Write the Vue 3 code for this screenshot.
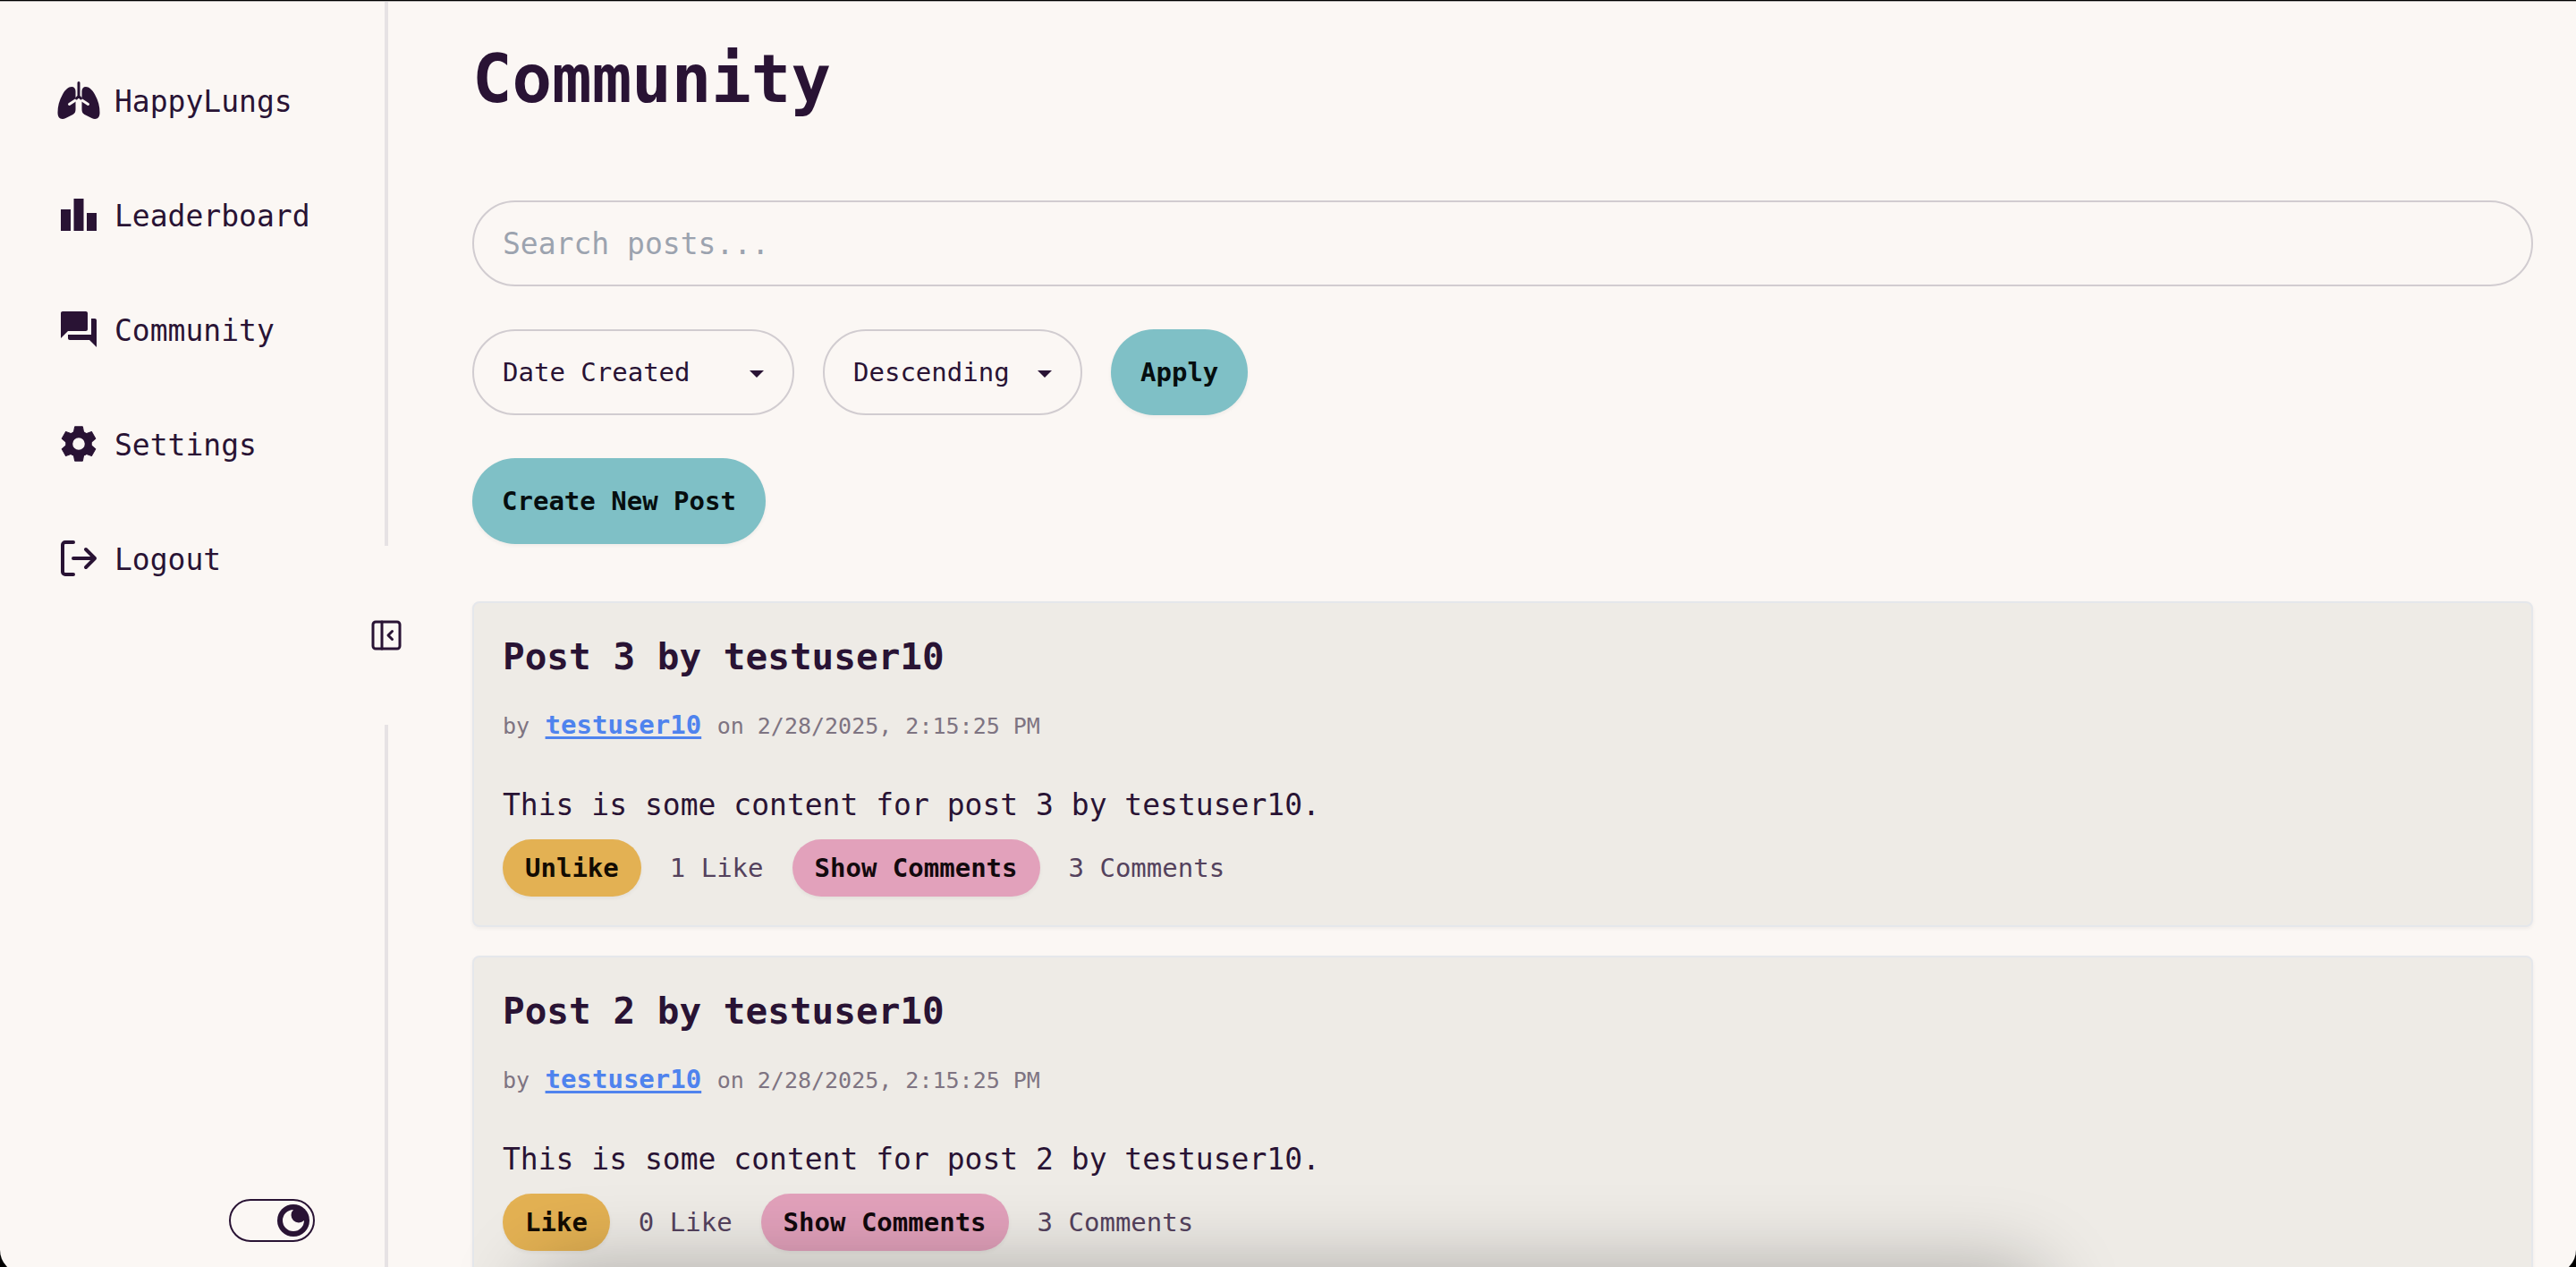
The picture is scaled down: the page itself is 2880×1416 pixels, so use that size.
<script setup>
import { ref } from 'vue'

const query = ref('')
const sortField = ref('date')
const sortOrder = ref('desc')
const darkMode = ref(true)
const cogTeeth = [0, 60, 120, 180, 240, 300]

const links = [
  { icon: 'lungs', label: 'HappyLungs' },
  { icon: 'leaderboard', label: 'Leaderboard' },
  { icon: 'forum', label: 'Community' },
  { icon: 'cog', label: 'Settings' },
  { icon: 'logout', label: 'Logout' },
]

const posts = [
  { id: 3, author: 'testuser10', date: '2/28/2025, 2:15:25 PM', liked: true, likes: 1, comments: 3 },
  { id: 2, author: 'testuser10', date: '2/28/2025, 2:15:25 PM', liked: false, likes: 0, comments: 3 },
]
</script>

<template>
  <div class="page">
    <aside class="sidebar">
      <nav class="nav">
        <a v-for="link in links" :key="link.label" href="#" class="nav-link">
          <svg v-if="link.icon === 'lungs'" class="nav-icon" viewBox="0 0 48 48" aria-hidden="true">
            <path
              fill="currentColor"
              d="M16 9C19 9 20.500 11 20.500 14V34C20.500 36.500 20 38.500 17.500 40L9.500 44C4.500 46.500 .5 44 .5 38C.5 31 2 24.500 6 17.500C9 12 12.500 9 16 9ZM32 9C29 9 27.500 11 27.500 14V34C27.500 36.500 28 38.500 30.500 40L38.500 44C43.500 46.500 47.500 44 47.500 38C47.500 31 46 24.500 42 17.500C39 12 35.500 9 32 9Z"
            />
            <path class="bronchi" d="M13.500 28.500L21.500 23.200M34.500 28.500L26.500 23.200" />
            <path class="trachea" d="M24 4.500V20.500M21.500 22L24 19.500L26.500 22" />
          </svg>
          <svg v-else-if="link.icon === 'leaderboard'" class="nav-icon" viewBox="0 0 24 24" aria-hidden="true">
            <path fill="currentColor" d="M7.500 21H2V9h5.500v12zm7.250-18h-5.500v18h5.500V3zM22 11h-5.500v10H22V11z" />
          </svg>
          <svg v-else-if="link.icon === 'forum'" class="nav-icon" viewBox="0 0 24 24" aria-hidden="true">
            <path
              fill="currentColor"
              d="M21 6h-2v9H6v2c0 .55.45 1 1 1h11l4 4V7c0-.55-.45-1-1-1zm-4 6V3c0-.55-.45-1-1-1H3c-.55 0-1 .45-1 1v14l4-4h10c.55 0 1-.45 1-1z"
            />
          </svg>
          <svg v-else-if="link.icon === 'cog'" class="nav-icon" viewBox="0 0 24 24" aria-hidden="true">
            <circle class="cog-ring" cx="12" cy="12" r="5.400" />
            <path
              v-for="angle in cogTeeth"
              :key="angle"
              class="cog-tooth"
              d="M9.800 2.400H14.200L14.800 5.600L15.600 6.500H8.400L9.200 5.600Z"
              :transform="`rotate(${angle} 12 12)`"
            />
          </svg>
          <svg v-else class="nav-icon" viewBox="0 0 24 24" aria-hidden="true">
            <path
              class="outline"
              d="M9 3H4.500A1.500 1.500 0 0 0 3 4.500V19.500A1.500 1.500 0 0 0 4.500 21H9M9 12H21M16 7L21 12L16 17"
            />
          </svg>
          <span class="nav-label">{{ link.label }}</span>
        </a>
      </nav>
      <label class="theme">
        <input v-model="darkMode" type="checkbox" class="theme-input" aria-label="Dark mode" />
        <span class="theme-track">
          <svg class="theme-knob" viewBox="0 0 36 36" aria-hidden="true">
            <circle cx="18" cy="18" r="18" fill="currentColor" />
            <path class="moon" d="M18 6A12 12 0 1 0 30 18A7 7 0 1 1 18 6Z" />
          </svg>
        </span>
      </label>
    </aside>

    <div class="divider">
      <span class="divider-line"></span>
      <button type="button" class="collapse" aria-label="Collapse sidebar">
        <svg class="collapse-icon" viewBox="0 0 36 36" aria-hidden="true">
          <rect x="3" y="3" width="30" height="30" rx="3" />
          <path d="M13 3V33M24.500 13.500L20 18L24.500 22.500" />
        </svg>
      </button>
      <span class="divider-line"></span>
    </div>

    <main class="content">
      <h1 class="title">Community</h1>
      <input v-model="query" type="text" class="search" placeholder="Search posts..." aria-label="Search posts" />
      <div class="filters">
        <label class="select-wrap sort-field">
          <select v-model="sortField" class="select" aria-label="Sort by">
            <option value="date">Date Created</option>
          </select>
          <svg class="caret" viewBox="0 0 16 8" aria-hidden="true"><path d="M0 0H16L8 8Z" /></svg>
        </label>
        <label class="select-wrap sort-order">
          <select v-model="sortOrder" class="select" aria-label="Sort order">
            <option value="desc">Descending</option>
          </select>
          <svg class="caret" viewBox="0 0 16 8" aria-hidden="true"><path d="M0 0H16L8 8Z" /></svg>
        </label>
        <button type="button" class="btn btn-primary">Apply</button>
      </div>
      <button type="button" class="btn btn-primary">Create New Post</button>

      <section class="posts">
        <article v-for="post in posts" :key="post.id" class="card">
          <h2 class="card-title">Post {{ post.id }} by {{ post.author }}</h2>
          <p class="meta">
            <span class="meta-text">by</span> <a href="#" class="author">{{ post.author }}</a> <span class="meta-text">on {{ post.date }}</span>
          </p>
          <p class="body">This is some content for post {{ post.id }} by {{ post.author }}.</p>
          <div class="actions">
            <button type="button" class="btn btn-small btn-like">{{ post.liked ? 'Unlike' : 'Like' }}</button>
            <span class="count">{{ post.likes }} Like</span>
            <button type="button" class="btn btn-small btn-comments">Show Comments</button>
            <span class="count">{{ post.comments }} Comments</span>
          </div>
        </article>
      </section>
    </main>

    <div class="dock-shadow"></div>
    <div class="window-frame"></div>
  </div>
</template>

<style>
body {
  background: #fbf7f4;
}
</style>

<style scoped>
.page {
  --ink: #291334;
  --base: #fbf7f4;
  box-sizing: border-box;
  display: flex;
  height: 100vh;
  overflow: hidden;
  background: var(--base);
  color: var(--ink);
  font-family: 'DejaVu Sans Mono', 'Liberation Mono', monospace;
  font-size: 33px;
  line-height: 48px;
}

.sidebar {
  box-sizing: border-box;
  display: flex;
  flex: none;
  flex-direction: column;
  justify-content: space-between;
  width: 414px;
  padding: 88px 62px 28px 64px;
}

.nav {
  display: flex;
  flex-direction: column;
  gap: 80px;
}

.nav-link {
  display: flex;
  align-items: center;
  gap: 16px;
  color: inherit;
  text-decoration: none;
}

.nav-label {
  padding-top: 4px;
  line-height: 44px;
}

.nav-icon {
  flex: none;
  width: 48px;
  height: 48px;
}

.bronchi {
  fill: none;
  stroke: var(--base);
  stroke-width: 3;
  stroke-linecap: round;
}

.trachea {
  fill: none;
  stroke: currentColor;
  stroke-width: 3;
  stroke-linecap: round;
}

.cog-ring {
  fill: none;
  stroke: currentColor;
  stroke-width: 4;
}

.cog-tooth {
  fill: currentColor;
  stroke: currentColor;
  stroke-width: 0.5;
  stroke-linejoin: round;
}

.outline {
  fill: none;
  stroke: currentColor;
  stroke-width: 2;
  stroke-linecap: round;
  stroke-linejoin: round;
}

.theme {
  position: relative;
  align-self: flex-end;
}

.theme-input {
  position: absolute;
  inset: 0;
  margin: 0;
  opacity: 0;
}

.theme-track {
  box-sizing: border-box;
  display: flex;
  align-items: center;
  width: 96px;
  height: 48px;
  padding: 0 4px;
  border: 2px solid var(--ink);
  border-radius: 24px;
}

.theme-input:checked + .theme-track {
  justify-content: flex-end;
}

.theme-knob {
  width: 36px;
  height: 36px;
}

.moon {
  fill: var(--base);
}

.divider {
  display: flex;
  flex: none;
  flex-direction: column;
  align-items: center;
  width: 36px;
  margin-bottom: -4px;
}

.divider-line {
  flex: 1;
  width: 4px;
  background: #e6e2e4;
}

.collapse {
  display: flex;
  align-items: center;
  height: 200px;
  padding: 0;
  border: 0;
  background: none;
  color: inherit;
}

.collapse-icon {
  width: 36px;
  height: 36px;
  fill: none;
  stroke: currentColor;
  stroke-width: 3;
  stroke-linecap: round;
  stroke-linejoin: round;
}

.content {
  display: flex;
  flex: 1;
  flex-direction: column;
  align-items: flex-start;
  min-width: 0;
  padding: 48px 48px 0 78px;
  overflow-y: auto;
  scrollbar-width: none;
}

.title {
  margin: 0 0 96px;
  font-size: 74px;
  line-height: 80px;
}

.search {
  box-sizing: border-box;
  flex: none;
  width: 100%;
  height: 96px;
  padding: 0 32px;
  border: 2px solid #d1ccd0;
  border-radius: 48px;
  background: transparent;
  color: inherit;
  font: inherit;
}

.search::placeholder {
  color: #9ca3af;
  opacity: 1;
}

.filters {
  display: flex;
  gap: 32px;
  margin: 48px 0;
}

.select-wrap {
  position: relative;
}

.sort-field {
  width: 360px;
}

.sort-order {
  width: 290px;
}

.select {
  box-sizing: border-box;
  width: 100%;
  height: 96px;
  padding: 0 32px;
  border: 2px solid #d1ccd0;
  border-radius: 48px;
  appearance: none;
  background: transparent;
  color: inherit;
  font-family: inherit;
  font-size: 29px;
}

.caret {
  position: absolute;
  top: 46px;
  right: 34px;
  width: 16px;
  height: 8px;
  fill: currentColor;
  pointer-events: none;
}

.btn {
  flex: none;
  height: 96px;
  padding: 0 33px;
  border: 0;
  border-radius: 48px;
  box-shadow: 0 2px 4px rgba(0, 0, 0, 0.05);
  font-family: inherit;
  font-size: 29px;
  font-weight: 700;
  white-space: nowrap;
}

.btn-primary {
  background: #7fc0c6;
  color: #060e0f;
}

.btn-small {
  height: 64px;
  padding: 0 25px;
  border-radius: 32px;
}

.btn-like {
  background: #e3b153;
  color: #130c02;
}

.btn-comments {
  background: #e2a1bb;
  color: #12090d;
}

.posts {
  display: flex;
  flex-direction: column;
  gap: 32px;
  align-self: stretch;
  padding: 64px 0 48px;
}

.card {
  padding: 32px;
  border: 2px solid #e5e7eb;
  border-radius: 8px;
  background: #eeebe6;
  box-shadow: 0 2px 4px rgba(0, 0, 0, 0.05);
}

.card-title {
  margin: 0 0 24px;
  font-size: 41px;
  line-height: 56px;
}

.meta {
  margin: 0 0 40px;
  font-size: 29px;
  line-height: 48px;
}

.meta-text {
  color: #7e7482;
  font-size: 25px;
}

.author {
  color: #4f83ee;
  font-weight: 700;
  text-decoration-thickness: 3px;
  text-underline-offset: 3px;
}

.body {
  margin: 0 0 14px;
}

.actions {
  display: flex;
  align-items: center;
  gap: 32px;
}

.count {
  color: #54425d;
  font-size: 29px;
}

/* Soft shadow cast upward from below the bottom edge */
.dock-shadow {
  position: fixed;
  top: 100%;
  left: 21%;
  right: 21%;
  height: 120px;
  border-radius: 32px;
  box-shadow: 0 12px 88px 12px rgba(0, 0, 0, 0.28);
  pointer-events: none;
}

.window-frame {
  position: fixed;
  inset: 0 0 -7px;
  border-top: 1px solid #000;
  border-radius: 0 0 26px 26px;
  box-shadow: 0 0 0 20px #000, inset 0 1px 0 #b4b2b1;
  pointer-events: none;
}
</style>
